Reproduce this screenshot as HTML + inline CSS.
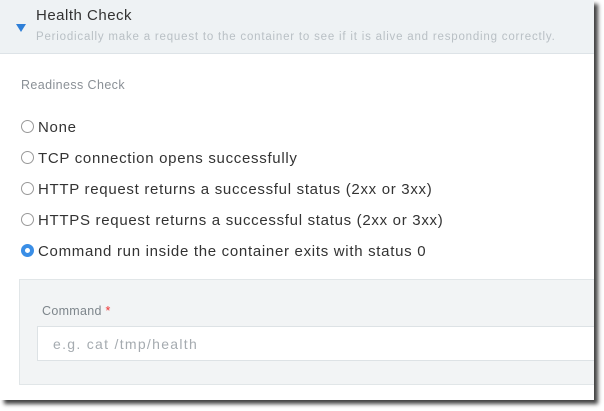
<!DOCTYPE html>
<html><head><style>
body{margin:0;width:604px;height:411px;background:#fff;font-family:"Liberation Sans",sans-serif;position:relative;overflow:hidden}
.card{position:absolute;left:0;top:0;width:594px;height:400px;background:#fff;box-shadow:4px 4px 4px rgba(0,0,0,.75);overflow:hidden}
.hdr{position:absolute;left:0;top:0;width:594px;height:53px;background:#eef2f4;border-bottom:1px solid #dde3e7}
.tri{position:absolute;left:16px;top:24px;width:0;height:0;border-left:5px solid transparent;border-right:5px solid transparent;border-top:8px solid #2e7fd8}
.t{position:absolute;left:36px;top:7px;font-size:15px;color:#333;letter-spacing:0.5px}
.s{position:absolute;left:36px;top:31px;font-size:11.5px;color:#b9c0c5;letter-spacing:0.8px}
.rc{position:absolute;left:21px;top:78px;font-size:12.5px;color:#8a9096;letter-spacing:0.4px}
.r{position:absolute;left:21px;font-size:15px;color:#333;white-space:nowrap;letter-spacing:0.7px}
.r i{display:inline-block;border:1px solid #999;border-radius:50%;vertical-align:-1px;margin-right:4px;box-sizing:border-box;width:13px;height:13px}
.r i.on{border:4px solid #3a8ee6;background:#fff}
.box{position:absolute;left:19px;top:279px;width:600px;height:104px;background:#f2f4f5;border:1px solid #e1e6e8}
.lbl{position:absolute;left:42px;top:304px;font-size:12.5px;color:#7e868c;letter-spacing:0.3px}
.lbl b{color:#e33;font-weight:normal}
.inp{position:absolute;left:37px;top:326px;width:600px;height:35px;background:#fff;border:1px solid #dde2e5;box-sizing:border-box}
.ph{position:absolute;left:53px;top:336px;font-size:14px;color:#a5abb0;letter-spacing:1.3px}
</style></head><body>
<div class="card">
<div class="hdr"><div class="tri"></div><div class="t">Health Check</div><div class="s">Periodically make a request to the container to see if it is alive and responding correctly.</div></div>
<div class="rc">Readiness Check</div>
<div class="r" style="top:119px"><i></i>None</div>
<div class="r" style="top:150px"><i></i>TCP connection opens successfully</div>
<div class="r" style="top:181px"><i></i>HTTP request returns a successful status (2xx or 3xx)</div>
<div class="r" style="top:212px"><i></i>HTTPS request returns a successful status (2xx or 3xx)</div>
<div class="r" style="top:243px"><i class="on"></i>Command run inside the container exits with status 0</div>
<div class="box"></div>
<div class="lbl">Command <b>*</b></div>
<div class="inp"></div>
<div class="ph">e.g. cat /tmp/health</div>
</div>
</body></html>
